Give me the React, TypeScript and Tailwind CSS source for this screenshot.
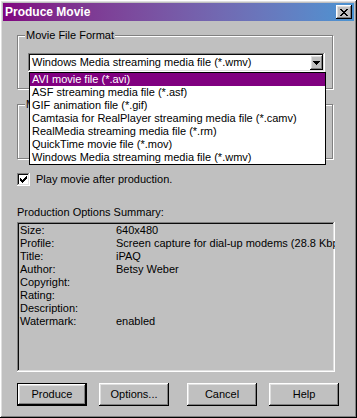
import React from "react";

const FORMATS = [
  "AVI movie file (*.avi)",
  "ASF streaming media file (*.asf)",
  "GIF animation file (*.gif)",
  "Camtasia for RealPlayer streaming media file (*.camv)",
  "RealMedia streaming media file (*.rm)",
  "QuickTime movie file (*.mov)",
  "Windows Media streaming media file (*.wmv)",
];

const SUMMARY: [string, string][] = [
  ["Size:", "640x480"],
  ["Profile:", "Screen capture for dial-up modems (28.8 Kbps)"],
  ["Title:", "iPAQ"],
  ["Author:", "Betsy Weber"],
  ["Copyright:", ""],
  ["Rating:", ""],
  ["Description:", ""],
  ["Watermark:", "enabled"],
];

const raised =
  "shadow-[inset_-1px_-1px_#000,inset_1px_1px_#fff,inset_-2px_-2px_#808080,inset_2px_2px_#dfdfdf]";
const sunken =
  "shadow-[inset_-1px_-1px_#fff,inset_1px_1px_#808080,inset_-2px_-2px_#dfdfdf,inset_2px_2px_#0a0a0a]";

function GroupBox({
  label,
  className,
  children,
}: {
  label: string;
  className?: string;
  children?: React.ReactNode;
}) {
  return (
    <div
      className={
        "relative border border-[#808080] shadow-[1px_1px_0_#fff,inset_1px_1px_0_#fff] " +
        (className ?? "")
      }
    >
      <span className="absolute -top-[7px] left-[7px] bg-[#c0c0c0] px-[1px] leading-[13px]">
        {label}
      </span>
      {children}
    </div>
  );
}

function Button({ label, isDefault }: { label: string; isDefault?: boolean }) {
  return (
    <div
      className={
        "flex h-[23px] w-[70px] items-center justify-center bg-[#c0c0c0] " +
        (isDefault ? "border border-black " : "") +
        raised
      }
    >
      {label}
    </div>
  );
}

export default function App() {
  return (
    <div
      className={
        "relative h-[418px] w-[357px] bg-[#c0c0c0] p-[3px] text-[11px] leading-[13px] text-black " +
        raised
      }
      style={{ fontFamily: '"Liberation Sans", Arial, sans-serif' }}
    >
      {/* title bar */}
      <div className="flex h-[18px] items-center justify-between bg-gradient-to-r from-[#800080] to-[#4a94d2] pl-[2px] pr-[2px]">
        <span className="text-[12px] font-bold text-white">Produce Movie</span>
        <div className={"flex h-[14px] w-[16px] items-center justify-center bg-[#c0c0c0] " + raised}>
          <svg width="8" height="7" viewBox="0 0 8 7" shapeRendering="crispEdges">
            <path
              fill="#000"
              d="M0 0h2v1h1v1h2V1h1V0h2v1H7v1H6v1H5v1h1v1h1v1h1v1H6V6H5V5H3v1H2v1H0V6h1V5h1V4h1V3H2V2H1V1H0z"
            />
          </svg>
        </div>
      </div>

      <div className="px-[14px]">
        <GroupBox label="Movie File Format" className="mt-[14px] h-[54px] w-[316px]">
          <div className={"ml-[10px] mt-[17px] flex h-[19px] w-[297px] items-center justify-between bg-white pl-[4px] pr-[2px] " + sunken}>
            <span className="whitespace-nowrap">Windows Media streaming media file (*.wmv)</span>
            <div className={"flex h-[15px] w-[13px] items-center justify-center bg-[#c0c0c0] " + raised}>
              <svg width="7" height="4" viewBox="0 0 7 4" shapeRendering="crispEdges">
                <path fill="#000" d="M0 0h7v1H6v1H5v1H4v1H3V3H2V2H1V1H0z" />
              </svg>
            </div>
          </div>
        </GroupBox>

        <GroupBox label="M" className="mt-[15px] h-[55px] w-[316px]" />

        <div className="mt-[14px] flex h-[13px] items-center gap-[6px]">
          <div className={"flex h-[13px] w-[13px] items-center justify-center bg-white " + sunken}>
            <svg width="7" height="7" viewBox="0 0 7 7" shapeRendering="crispEdges">
              <path fill="#000" d="M6 0h1v3H6v1H5v1H4v1H3v1H2V6H1V5H0V2h1v1h1v1h1V3h1V2h1V1h1z" />
            </svg>
          </div>
          <span>Play movie after production.</span>
        </div>

        <div className="mt-[20px]">Production Options Summary:</div>

        <div className={"mt-[3px] h-[150px] w-[318px] overflow-hidden px-[3px] py-[2px] " + sunken}>
          {SUMMARY.map(([k, v]) => (
            <div key={k} className="flex h-[13px] items-center whitespace-nowrap">
              <span className="w-[96px] shrink-0">{k}</span>
              <span>{v}</span>
            </div>
          ))}
        </div>

        <div className="mt-[11px] flex">
          <Button label="Produce" isDefault />
          <div className="ml-[12px]">
            <Button label="Options..." />
          </div>
          <div className="ml-[18px]">
            <Button label="Cancel" />
          </div>
          <div className="ml-[12px]">
            <Button label="Help" />
          </div>
        </div>
      </div>

      {/* open dropdown list */}
      <div className="absolute left-[29px] top-[72px] w-[297px] border border-black bg-white">
        {FORMATS.map((f, i) => (
          <div
            key={f}
            className={
              "flex h-[13px] items-center whitespace-nowrap pl-[2px] " +
              (i === 0 ? "bg-[#800080] text-white" : "")
            }
          >
            {f}
          </div>
        ))}
      </div>
    </div>
  );
}
